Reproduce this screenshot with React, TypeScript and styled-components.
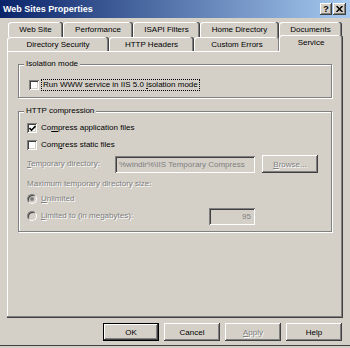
import React from 'react'
import styled, { createGlobalStyle, css } from 'styled-components'

const GlobalStyle = createGlobalStyle`
  html, body {
    margin: 0;
    padding: 0;
    background: #d4d0c8;
  }
  body {
    font-family: "Liberation Sans", Arial, sans-serif;
    font-size: 8px;
    color: #000;
  }
`

const raised = css`
  background-color: #d4d0c8;
  box-shadow: inset -1px -1px #404040, inset 1px 1px #ffffff, inset -2px -2px #808080, inset 2px 2px #d4d0c8;
`

const sunken = css`
  box-shadow: inset 1px 1px #808080, inset -1px -1px #ffffff, inset 2px 2px #404040, inset -2px -2px #d4d0c8;
`

const disabledText = css`
  color: #808080;
  text-shadow: 1px 1px #ffffff;
`

const Window = styled.div`
  width: 350px;
  height: 348px;
  box-sizing: border-box;
  background-color: #d4d0c8;
  display: flex;
  flex-direction: column;
  box-shadow: inset 0 -2px #d4d0c8, inset 0 -3px #404040;
  overflow: hidden;
`

const TitleBar = styled.div`
  height: 18px;
  box-sizing: border-box;
  padding: 0 4px 0 3px;
  display: flex;
  align-items: center;
  gap: 1px;
  background: linear-gradient(to right, #0a246a, #a6caf0);
`

const Title = styled.span`
  flex: 1;
  color: #fff;
  font-weight: bold;
  font-size: 9px;
`

const TitleButton = styled.div<{ $w: number }>`
  ${raised};
  width: ${p => p.$w}px;
  height: 12px;
  display: flex;
  align-items: center;
  justify-content: center;
  font-weight: bold;
  font-size: 9px;
  line-height: 1;
`

const TabStrip = styled.div`
  margin: 4px 0 0 7px;
  width: 336px;
  display: flex;
  flex-direction: column;
`

const TabRow = styled.div<{ $h: number; $pad: number }>`
  display: flex;
  align-items: flex-end;
  height: ${p => p.$h}px;
  padding-left: ${p => p.$pad}px;
`

const Tab = styled.div<{ $w: number; $selected?: boolean }>`
  width: ${p => p.$w}px;
  height: 100%;
  flex-shrink: 0;
  box-sizing: border-box;
  display: flex;
  align-items: center;
  justify-content: center;
  background-color: #d4d0c8;
  border-radius: 3px 3px 0 0;
  box-shadow: inset -1px 0 #404040, inset -2px 0 #808080, inset 1px 1px #ffffff;
  white-space: nowrap;

  ${p => p.$selected && css`
    height: 17px;
    margin: 0 0 -1px -1px;
    position: relative;
    z-index: 2;
    padding-bottom: 2px;
  `}
`

const Panel = styled.div`
  margin-left: 7px;
  width: 336px;
  height: 267px;
  box-sizing: border-box;
  padding: 1px;
  display: flex;
  flex-direction: column;
  box-shadow: inset -1px -1px #404040, inset -2px -2px #808080, inset 1px 1px #ffffff;
`

const GroupBox = styled.div<{ $top: number }>`
  position: relative;
  margin: ${p => p.$top}px 0 0 10px;
  width: 314px;
  box-sizing: border-box;
  border: 1px solid #808080;
  box-shadow: 1px 1px #ffffff, inset 1px 1px #ffffff;
  display: flex;
  flex-direction: column;
`

const GroupLabel = styled.span`
  position: absolute;
  top: -6px;
  left: 5px;
  padding: 0 2px;
  line-height: 10px;
  background-color: #d4d0c8;
`

const Row = styled.div<{ $h: number; $mt?: number; $indent: number }>`
  display: flex;
  align-items: center;
  height: ${p => p.$h}px;
  margin-top: ${p => p.$mt ?? 0}px;
  padding-left: ${p => p.$indent}px;
  white-space: nowrap;
`

const Spacer = styled.div<{ $w?: number; $h?: number }>`
  flex-shrink: 0;
  width: ${p => p.$w ?? 0}px;
  height: ${p => p.$h ?? 0}px;
`

const CheckBox = styled.div`
  width: 10px;
  height: 10px;
  flex-shrink: 0;
  background-color: #ffffff;
  ${sunken};
  display: flex;
  align-items: center;
  justify-content: center;
  margin-right: 4px;
`

const Radio = styled.div<{ $checked?: boolean }>`
  position: relative;
  width: 10px;
  height: 10px;
  flex-shrink: 0;
  box-sizing: border-box;
  border-radius: 50%;
  border: 1px solid;
  border-color: #808080 #ffffff #ffffff #808080;
  background-color: #d4d0c8;
  box-shadow: inset 1px 1px #404040;
  margin-right: 4px;

  ${p => p.$checked && css`
    &::after {
      content: '';
      position: absolute;
      left: 2px;
      top: 2px;
      width: 4px;
      height: 4px;
      border-radius: 50%;
      background-color: #808080;
    }
  `}
`

const Label = styled.span<{ $disabled?: boolean; $focus?: boolean; $w?: number }>`
  line-height: 10px;
  ${p => p.$disabled && disabledText};
  ${p => p.$w && css`width: ${p.$w}px; flex-shrink: 0;`}
  ${p => p.$focus && css`
    outline: 1px dotted #000;
    outline-offset: 0;
    padding: 0 1px;
    margin-left: -1px;
  `}
`

const Field = styled.div<{ $w: number; $right?: boolean }>`
  width: ${p => p.$w}px;
  height: 17px;
  box-sizing: border-box;
  padding: 0 4px;
  display: flex;
  align-items: center;
  justify-content: ${p => (p.$right ? 'flex-end' : 'flex-start')};
  white-space: nowrap;
  background-color: #d4d0c8;
  color: #808080;
  ${sunken};
`

const Button = styled.div<{ $default?: boolean; $disabled?: boolean }>`
  ${raised};
  width: 56px;
  height: 18px;
  flex-shrink: 0;
  display: flex;
  align-items: center;
  justify-content: center;
  ${p => p.$disabled && disabledText};
  ${p => p.$default && css`
    box-shadow: inset 0 0 0 1px #000000, inset -2px -2px #404040, inset 2px 2px #ffffff, inset -3px -3px #808080;
  `}
`

const ButtonBar = styled.div`
  margin-top: 5px;
  padding-right: 8px;
  display: flex;
  justify-content: flex-end;
  gap: 5px;
`

const Check = () => (
  <svg width="7" height="7" viewBox="0 0 7 7">
    <path d="M0.5 3 L2.5 5.2 L6.5 1" fill="none" stroke="#000" strokeWidth="1.6" />
  </svg>
)

const CloseGlyph = () => (
  <svg width="7" height="6" viewBox="0 0 7 6">
    <path d="M0.5 0 L6.5 6 M6.5 0 L0.5 6" stroke="#000" strokeWidth="1.5" />
  </svg>
)

const backTabs = [
  { label: 'Web Site', w: 55 },
  { label: 'Performance', w: 70 },
  { label: 'ISAPI Filters', w: 67 },
  { label: 'Home Directory', w: 79 },
  { label: 'Documents', w: 63 },
]

const frontTabs = [
  { label: 'Directory Security', w: 102 },
  { label: 'HTTP Headers', w: 85 },
  { label: 'Custom Errors', w: 86 },
]

export default function App() {
  return (
    <>
      <GlobalStyle />
      <Window>
        <TitleBar>
          <Title>Web Sites Properties</Title>
          <TitleButton $w={12}>?</TitleButton>
          <TitleButton $w={13}><CloseGlyph /></TitleButton>
        </TitleBar>

        <TabStrip>
          <TabRow $h={15} $pad={1}>
            {backTabs.map(t => <Tab key={t.label} $w={t.w}>{t.label}</Tab>)}
          </TabRow>
          <TabRow $h={14} $pad={0}>
            {frontTabs.map(t => <Tab key={t.label} $w={t.w}>{t.label}</Tab>)}
            <Tab $w={64} $selected>Service</Tab>
          </TabRow>
        </TabStrip>

        <Panel>
          <GroupBox $top={12}>
            <GroupLabel>Isolation mode</GroupLabel>
            <Row $h={12} $mt={14} $indent={10}>
              <CheckBox />
              <Label $focus>Run WWW service in IIS 5.0 <u>i</u>solation mode</Label>
            </Row>
            <Spacer $h={6} />
          </GroupBox>

          <GroupBox $top={13}>
            <GroupLabel>HTTP compression</GroupLabel>
            <Row $h={16} $mt={8} $indent={8}>
              <CheckBox><Check /></CheckBox>
              <Label>Co<u>m</u>press application files</Label>
            </Row>
            <Row $h={17} $indent={8}>
              <CheckBox />
              <Label>Com<u>p</u>ress static files</Label>
            </Row>
            <Row $h={20} $mt={1} $indent={8}>
              <Label $disabled $w={88}><u>T</u>emporary directory:</Label>
              <Field $w={140}>%windir%\IIS Temporary Compress</Field>
              <Spacer $w={7} />
              <Button $disabled><span><u>B</u>rowse...</span></Button>
            </Row>
            <Row $h={16} $mt={2} $indent={8}>
              <Label $disabled>Maximum temporary directory size:</Label>
            </Row>
            <Row $h={14} $indent={8}>
              <Radio $checked />
              <Label $disabled><u>U</u>nlimited</Label>
            </Row>
            <Row $h={18} $mt={1} $indent={8}>
              <Radio />
              <Label $disabled $w={168}><u>L</u>imited to (in megabytes):</Label>
              <Field $w={46} $right>95</Field>
            </Row>
            <Spacer $h={6} />
          </GroupBox>
        </Panel>

        <ButtonBar>
          <Button $default>OK</Button>
          <Button>Cancel</Button>
          <Button $disabled><span><u>A</u>pply</span></Button>
          <Button>Help</Button>
        </ButtonBar>
      </Window>
    </>
  )
}
